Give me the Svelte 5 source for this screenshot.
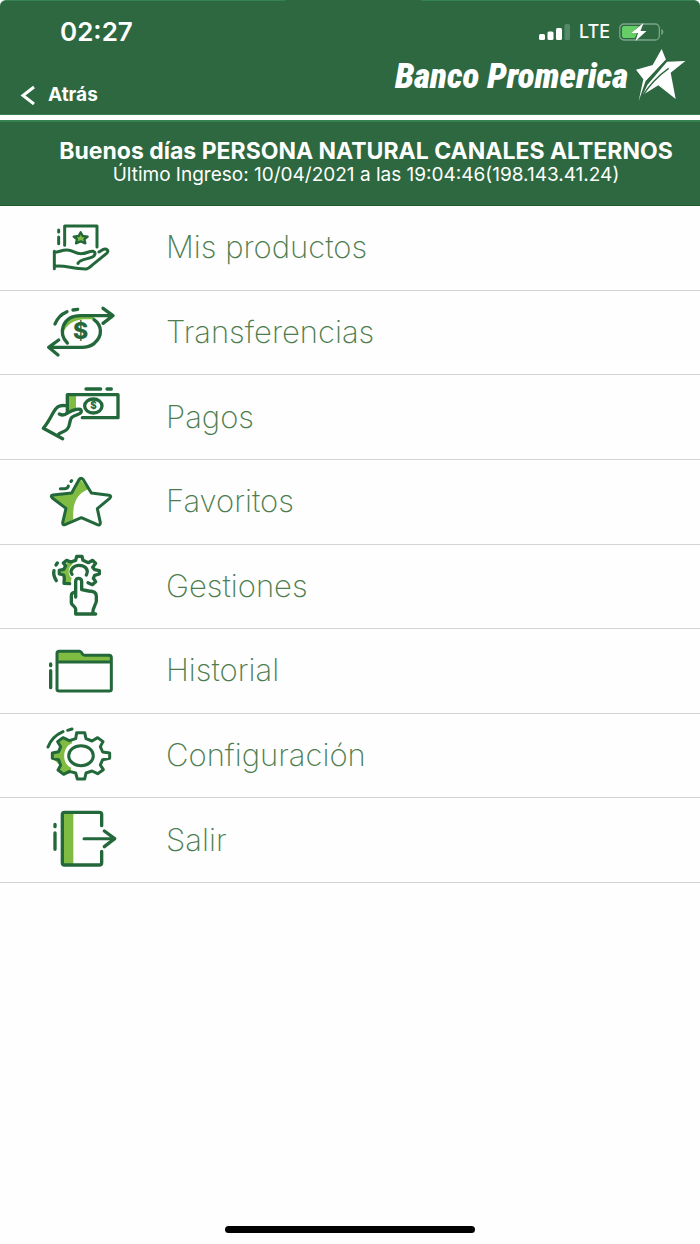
<script>
  const user = 'PERSONA NATURAL CANALES ALTERNOS';
  const lastLogin = '10/04/2021 a las 19:04:46(198.143.41.24)';

  // top is where each drawing starts inside its 330x240 box
  const menu = [
    { id: 'productos', label: 'Mis productos', top: -7 },
    { id: 'transferencias', label: 'Transferencias', top: -8 },
    { id: 'pagos', label: 'Pagos', top: -3 },
    { id: 'favoritos', label: 'Favoritos', top: -7 },
    { id: 'gestiones', label: 'Gestiones', top: -5 },
    { id: 'historial', label: 'Historial', top: -4 },
    { id: 'configuracion', label: 'Configuración', top: -2 },
    { id: 'salir', label: 'Salir', top: 0 }
  ];
</script>

<div class="page">
  <header>
    <div class="notch"></div>
    <div class="status">
      <span class="time">02:27</span>
      <div class="signals">
        <svg class="bars" viewBox="0 0 31 16" aria-hidden="true">
          <rect x="0" y="10" width="6" height="6" rx="1.5" />
          <rect x="8.5" y="7.5" width="6" height="8.5" rx="1.5" />
          <rect x="17" y="4" width="6" height="12" rx="1.5" />
          <rect x="25.5" y="0" width="5.5" height="16" rx="1.5" class="dim" />
        </svg>
        <span class="network">LTE</span>
        <svg class="battery" viewBox="0 0 46 18" aria-hidden="true">
          <rect x="0.8" y="1" width="39.5" height="16" rx="4" fill="none" stroke="#7ba58a" stroke-width="1.3" />
          <path d="M42.3 6 C45 7 45 11 42.3 12 Z" fill="#7ba58a" />
          <path d="M5 3 H20 L12 10 H18 L16 15 H5 Q3 15 3 13 V5 Q3 3 5 3 Z" fill="#67ce67" />
          <path d="M24.5 0 L12 10 H19 L16.5 18 L27.5 8 H21.5 Z" fill="#fff" />
        </svg>
      </div>
    </div>
    <div class="bar">
      <a class="back" href="#inicio">
        <svg viewBox="0 0 16 20" aria-hidden="true">
          <path d="M14 2 L3 10.5 L14 19" />
        </svg>
        Atrás
      </a>
      <div class="brand">
        <span>Banco Promerica</span>
        <svg viewBox="0 0 150 156" aria-hidden="true">
          <path d="M77 0 L90 32 L28 98 L8 156 L22 91 L0 62 L50 48 Z" />
          <path d="M93 38 L148 36 L104 71 L119 150 L67 109 L20 138 L34 108 Z" />
          <path class="cut" d="M18 143 Q50 92 98 58" />
          <path class="cut" d="M30 98 L92 32" />
        </svg>
      </div>
    </div>
  </header>

  <section class="welcome">
    <h1>Buenos días {user}</h1>
    <p>Último Ingreso: {lastLogin}</p>
  </section>

  <nav>
    {#each menu as item}
      <a class="item" href="#{item.id}">
        <svg class="icon" viewBox="0 {item.top} 330 240" aria-hidden="true">
          {#if item.id === 'productos'}
            <path d="M104 105 V47 H201 V110 M86 59 V65 M86 80 V100" />
            <path class="leaf" d="M152 66 L158 77 L173 79 L163 87 L166 99 L152 93 L138 99 L141 87 L131 79 L146 77 Z" />
            <path d="M73 123 V175 M73 126 C88 126 92 119 111 119 C130 119 134 130 153 130 C171 130 177 121 190 123 C199 126 195 136 187 140 C173 147 149 147 144 159 M73 168 C103 163 130 177 169 176 C178 174 184 166 192 160 L229 130 C240 120 229 113 218 118 L207 125" />
          {:else if item.id === 'transferencias'}
            <path class="green" d="M97 128 C101 100 120 77 160 74 H192 V62 H150 C109 64 86 91 97 128 Z" />
            <path class="thick" d="M112 145 C82 117 97 63 152 63 H249 M219 41 L249 63 L219 86 M192 75 C216 92 219 123 193 146 C183 154 170 158 155 158 H56 M86 136 L56 158 L84 181 M75 88 C82 70 94 58 111 51 M129 46 L143 44" />
            <text x="152" y="134" font-size="69">$</text>
          {:else if item.id === 'pagos'}
            <path class="green" d="M112 52 H138 V94 L112 101 Z" />
            <path class="thick" d="M112 105 V50 H264 V119 H157 M168 33 H212 M231 33 H244" />
            <ellipse class="thick" cx="190" cy="84" rx="26" ry="21" />
            <text x="190" y="94" font-size="29">$</text>
            <path class="thick" d="M106 83 C86 80 78 89 69 105 C60 122 50 139 40 151 L98 182 M84 171 C89 162 102 164 112 153 C123 141 116 125 127 117 C138 109 153 110 154 101 C154 90 141 93 129 97 L112 105 C103 113 95 112 88 108" />
          {:else if item.id === 'favoritos'}
            <path class="green" d="M150 43 L174 75 C137 91 127 122 130 165 L100 181 L108 132 L65 96 L125 87 Z" />
            <path d="M147 46 Q153 37 160 46 L184 86 L237 93 Q246 95 239 102 L202 133 L211 175 Q211 184 202 181 L154 160 L105 181 Q98 183 98 175 L108 132 L67 101 Q60 94 69 92 L125 86 Z M91 73 H105 Q114 72 115 65 M123 51 L125 49" />
          {:else if item.id === 'gestiones'}
            <path class="green" d="M113 42 L134 38 L126 51 C113 62 113 80 125 91 L121 107 L102 103 L103 91 L91 74 L103 57 Z" />
            <path class="thick" d="M119 108 L102 107 L103 91 L101 82 L88 79 V68 L101 65 L107 55 L100 46 L110 38 L122 43 L137 38 L140 26 H156 L159 38 L175 45 L188 38 L197 47 L188 59 L194 66 L208 69 V79 L194 83 L190 92 L197 102 L187 111 L174 105 M126 80 C117 68 131 53 147 53 C167 53 177 67 169 82" />
            <path class="thick" d="M137 148 V101 C137 89 154 89 155 101 V126 L176 130 C189 130 199 134 199 145 V159 C199 171 188 177 188 198 M137 133 C126 135 124 137 124 144 V166 C126 173 136 177 137 184 V199 H197 M82 46 L78 52 M72 69 C69 80 74 91 79 99" />
          {:else if item.id === 'historial'}
            <path class="green" d="M81 89 V61 L86 57 H151 L163 69 H238 L244 74 V89 Z" />
            <path d="M81 63 Q81 57 88 57 H150 Q154 58 156 63 Q159 69 165 69 H237 Q244 69 244 76 V171 Q244 176 238 176 H88 Q81 176 81 171 Z M81 89 H244" />
            <path class="thick" d="M62 95 V100 M62 115 V166" />
          {:else if item.id === 'configuracion'}
            <path class="green" d="M82 73 L97 63 L113 71 L127 68 L126 80 C95 92 95 143 124 153 L120 171 L99 171 L83 160 L88 144 L68 126 V107 L87 103 L92 86 Z" />
            <path d="M140 48 H164 L168 66 L186 73 L203 63 L219 75 L211 90 L218 106 L239 109 V125 L218 129 L211 145 L220 159 L203 171 L186 163 L168 169 L164 187 H142 L137 169 L118 164 L101 173 L84 160 L92 146 L86 129 L67 125 V109 L86 105 L92 90 L83 75 L99 63 L118 72 L137 66 Z M54 91 C62 70 76 55 99 45 M113 41 L126 37" />
            <ellipse cx="153" cy="117" rx="37" ry="30" />
          {:else}
            <path class="green" d="M100 39 H130 V193 H100 Z" />
            <path class="thick" d="M215 77 V43 Q215 37 208 37 H103 Q97 37 97 44 V188 Q97 195 104 195 H208 Q215 195 215 188 V154 M75 73 V80 M75 99 V148 M223 93 L254 116 L223 140" />
            <path d="M162 116 H254" />
          {/if}
        </svg>
        <span>{item.label}</span>
      </a>
    {/each}
  </nav>

  <footer>
    <div class="home"></div>
  </footer>
</div>

<style>
  :global(body) {
    background: #fefefe;
  }
  .page {
    min-height: 100vh;
    display: flex;
    flex-direction: column;
    font-family: Inter, "Liberation Sans", sans-serif;
    color: #fff;
  }
  header {
    box-sizing: border-box;
    height: 115px;
    background: #2d6840;
    border-top: 1px solid #348351;
    border-bottom: 1px solid #348351;
    border-radius: 6px 6px 0 0;
  }
  .notch {
    width: 136px;
    height: 1px;
    margin: -1px auto 0;
    position: relative;
    left: 3px;
    background: #2d6840;
  }
  .status {
    display: flex;
    justify-content: space-between;
    align-items: center;
    height: 50px;
    padding: 11px 35px 0 60px;
    box-sizing: border-box;
  }
  .time {
    font-size: 26px;
    font-weight: 600;
  }
  .signals {
    display: flex;
    align-items: center;
    gap: 9px;
  }
  .bars {
    width: 31px;
    height: 16px;
    fill: #fff;
  }
  .bars .dim {
    fill: #55896a;
  }
  .network {
    font-size: 18px;
    font-weight: 500;
  }
  .battery {
    width: 46px;
    height: 18px;
  }
  .bar {
    display: flex;
    justify-content: space-between;
    align-items: flex-end;
    height: 50px;
    padding: 0 14px 0 20px;
  }
  .back {
    display: flex;
    align-items: center;
    gap: 12px;
    color: #fff;
    font-size: 19px;
    font-weight: 700;
    text-decoration: none;
    line-height: 20px;
    margin-bottom: -4px;
  }
  .back svg {
    width: 16px;
    height: 20px;
    fill: none;
    stroke: #fff;
    stroke-width: 3;
  }
  .brand {
    display: flex;
    align-items: center;
    gap: 8px;
    font-family: "Roboto Condensed", Roboto, sans-serif;
    font-size: 35px;
    font-weight: 900;
    font-style: italic;
    line-height: 52px;
  }
  .brand span {
    padding-top: 4px;
    line-height: 48px;
  }
  .brand svg {
    width: 50px;
    height: 52px;
    fill: #fff;
  }
  .brand .cut {
    fill: none;
    stroke: #2d6840;
    stroke-width: 4;
  }
  .welcome {
    box-sizing: border-box;
    height: 86px;
    margin-top: 5px;
    padding: 17px 0 0 32px;
    background: #2d6840;
    border-top: 2px solid #348351;
    border-bottom: 1px solid #1f5c2b;
    text-align: center;
    white-space: nowrap;
  }
  h1 {
    margin: 0;
    font-size: 23px;
    font-weight: 700;
    line-height: 24px;
  }
  p {
    margin: 0;
    font-size: 19px;
    line-height: 24px;
  }
  nav {
    flex: 1;
    display: grid;
    grid-auto-rows: 1fr;
  }
  .item {
    display: flex;
    align-items: center;
    gap: 26px;
    padding-left: 30px;
    border-bottom: 1px solid #d4d4d4;
    color: #4d7d4f;
    font-size: 31px;
    font-weight: 200;
    text-decoration: none;
  }
  .item span {
    padding-bottom: 2px;
  }
  .item:hover {
    background: #f4f8f4;
  }
  .icon {
    width: 110px;
    height: 80px;
    fill: none;
    stroke: #23683b;
    stroke-width: 9;
    stroke-linecap: round;
    stroke-linejoin: round;
  }
  .icon .thick {
    stroke-width: 10;
  }
  .icon .green {
    fill: #80bb42;
    stroke: none;
  }
  .icon .leaf {
    fill: #80bb42;
    stroke-width: 7;
  }
  .icon text {
    fill: #23683b;
    stroke: none;
    font-weight: 800;
    text-anchor: middle;
  }
  footer {
    display: flex;
    align-items: flex-end;
    justify-content: center;
    height: 361px;
  }
  .home {
    width: 250px;
    height: 7px;
    margin-bottom: 11px;
    border-radius: 4px;
    background: #000;
  }
</style>
